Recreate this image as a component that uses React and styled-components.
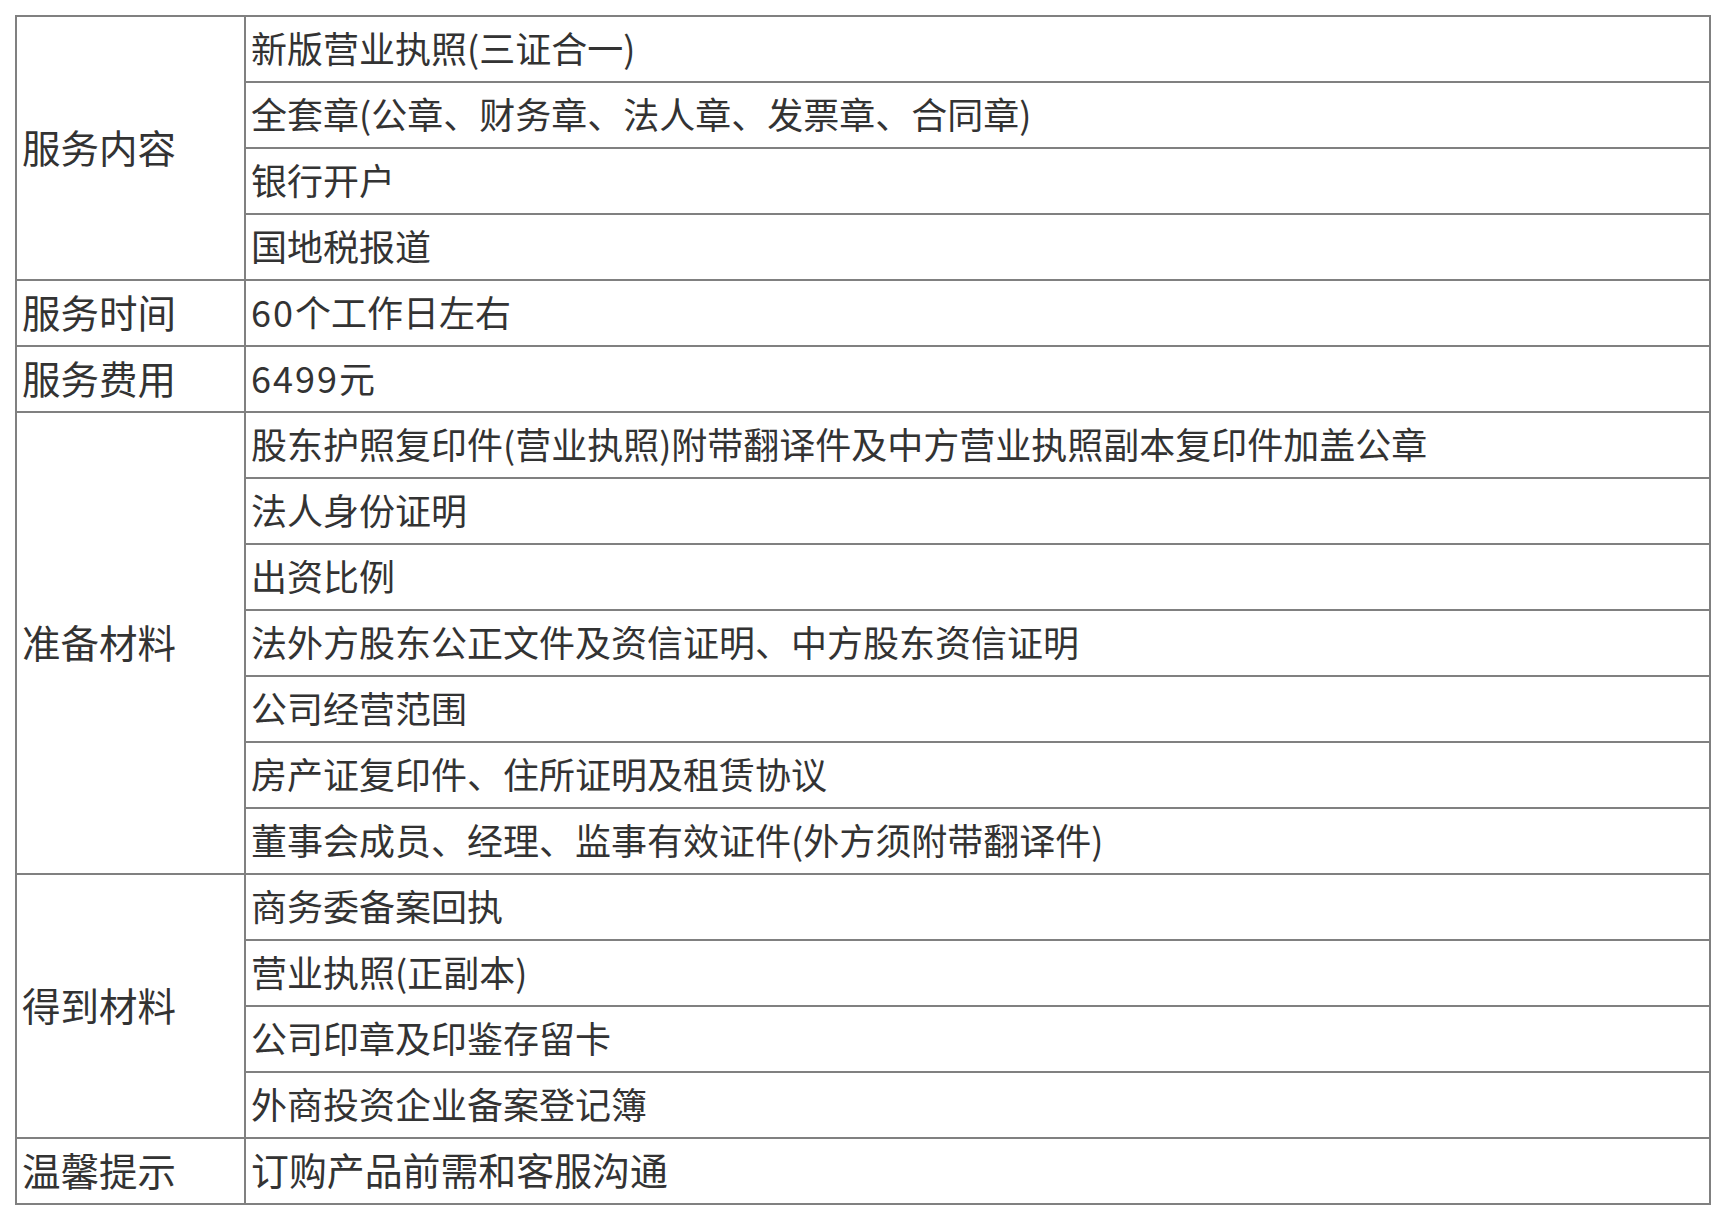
import React from "react";
import styled, { createGlobalStyle } from "styled-components";

const Global = createGlobalStyle`
  html, body { margin: 0; padding: 0; background: #fff; }
  body { font-family: "Noto Sans CJK SC", "Noto Sans", sans-serif; }
`;

const Page = styled.div`
  padding: 15px;
`;

const Table = styled.table`
  width: 100%;
  border-collapse: collapse;
  table-layout: fixed;
  color: #333;
  font-family: "Noto Sans CJK SC", "Noto Sans", sans-serif;
`;

const Row = styled.tr`
  height: 66px;
`;

const Cell = styled.td`
  border: 2px solid #808080;
  padding: 0 0 4px 5px;
  font-size: ${(p) => p.$size || "36px"};
  vertical-align: middle;
  line-height: 40px;
  white-space: nowrap;
`;

const Num = styled.span`
  letter-spacing: 2px;
`;

const renderText = (text) =>
  text.split(/(\d+)/).map((part, i) =>
    /^\d+$/.test(part) ? <Num key={i}>{part}</Num> : part
  );

const sections = [
  {
    title: "服务内容",
    items: [
      "新版营业执照(三证合一)",
      "全套章(公章、财务章、法人章、发票章、合同章)",
      "银行开户",
      "国地税报道",
    ],
  },
  { title: "服务时间", items: ["60个工作日左右"] },
  { title: "服务费用", items: ["6499元"] },
  {
    title: "准备材料",
    items: [
      "股东护照复印件(营业执照)附带翻译件及中方营业执照副本复印件加盖公章",
      "法人身份证明",
      "出资比例",
      "法外方股东公正文件及资信证明、中方股东资信证明",
      "公司经营范围",
      "房产证复印件、住所证明及租赁协议",
      "董事会成员、经理、监事有效证件(外方须附带翻译件)",
    ],
  },
  {
    title: "得到材料",
    items: [
      "商务委备案回执",
      "营业执照(正副本)",
      "公司印章及印鉴存留卡",
      "外商投资企业备案登记簿",
    ],
  },
  { title: "温馨提示", items: ["订购产品前需和客服沟通"], size: "37.9px" },
];

export default function App() {
  return (
    <>
      <Global />
      <Page>
        <Table>
          <colgroup>
            <col style={{ width: "229px" }} />
            <col />
          </colgroup>
          <tbody>
            {sections.map((s) =>
              s.items.map((item, i) => (
                <Row key={s.title + i}>
                  {i === 0 && (
                    <Cell $size="38.5px" rowSpan={s.items.length}>
                      {s.title}
                    </Cell>
                  )}
                  <Cell $size={s.size}>{renderText(item)}</Cell>
                </Row>
              ))
            )}
          </tbody>
        </Table>
      </Page>
    </>
  );
}
